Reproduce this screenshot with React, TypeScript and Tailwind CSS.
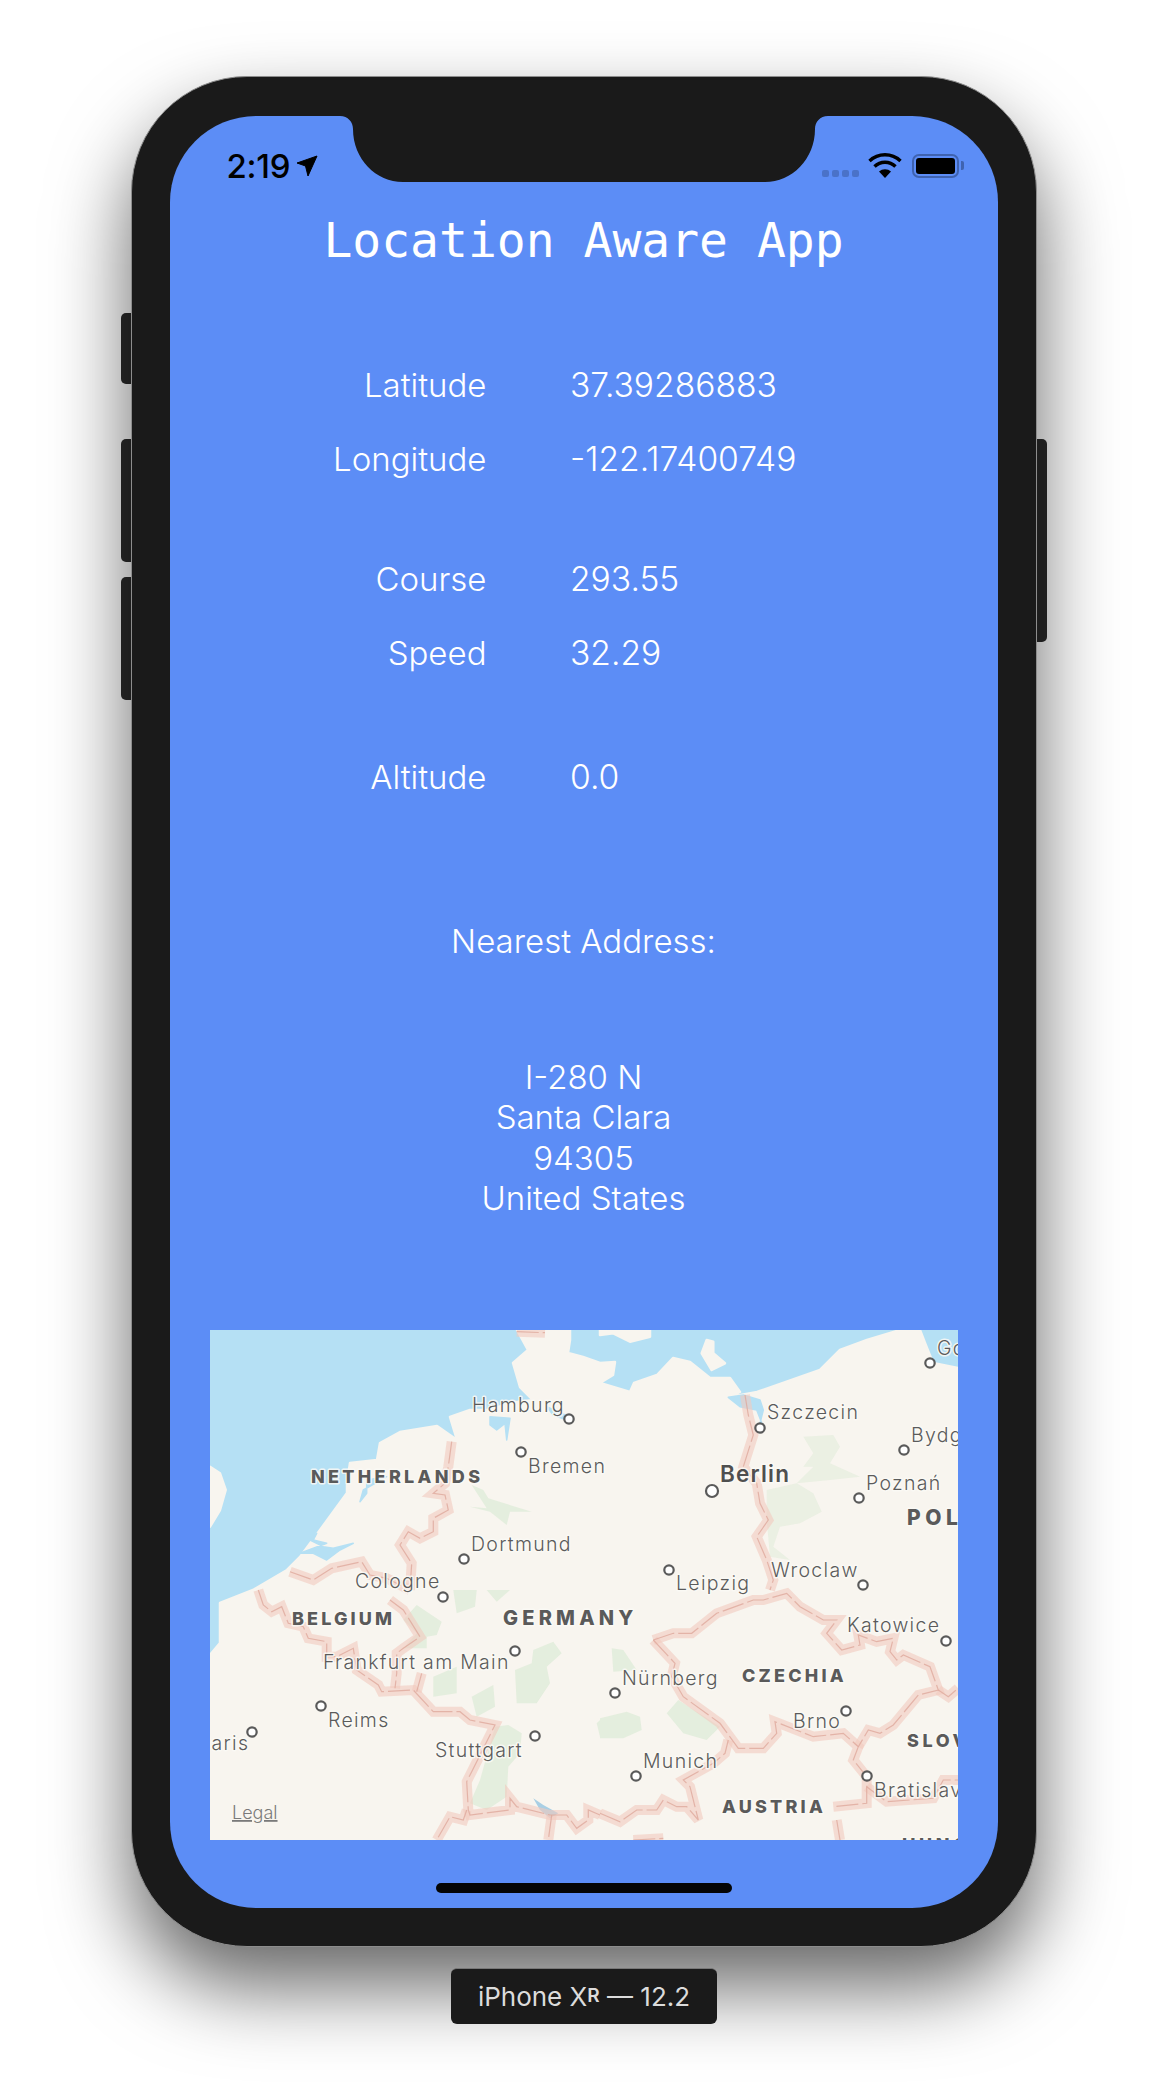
import React from "react";

const City = ({ x, y, t }: { x: number; y: number; t: string }) => (
  <text x={x} y={y} fontSize={19.5} letterSpacing={1.3} fill="#5b5b5b" stroke="#fbfaf6" strokeWidth={3} strokeOpacity={0.85} paintOrder="stroke" strokeLinejoin="round">
    {t}
  </text>
);
const Country = ({ x, y, t, ls = 3.2, size = 18 }: { x: number; y: number; t: string; ls?: number; size?: number }) => (
  <text x={x} y={y} fontSize={size} fontWeight={800} letterSpacing={ls} fill="#5a5a5a" stroke="#fbfaf6" strokeWidth={3} strokeOpacity={0.85} paintOrder="stroke" strokeLinejoin="round">
    {t}
  </text>
);

const conv = (ox: number, oy: number) => (s: string) =>
  s.trim().split(/\s+/).map((p) => {
    const [a, b] = p.split(",").map(Number);
    return `${(ox + a / 3).toFixed(1)},${(oy + b / 3).toFixed(1)}`;
  }).join(" ");
const z3 = conv(200, 1320);
const z4 = conv(600, 1320);
const z5 = conv(200, 1590);
const z6 = conv(600, 1590);

const borders = [
  z3("950,35 1035,38"),
  z3("755,365 745,440 735,490 700,520 735,525 745,570 700,595 700,635 660,655 625,635 600,675 635,730 630,810"),
  z3("270,755 340,780 395,745 485,725 510,765 560,775 630,810"),
  z5("570,30 610,60 660,140 610,175 590,190 590,250 585,295"),
  z5("175,0 190,45 215,65 245,50 265,100 310,110 325,145 380,155 380,200 410,200 460,175 470,240 535,285 545,305 640,300 700,365 780,365 810,390 885,405 815,545 800,575 805,660 810,675 930,660 930,625 950,650 1050,675 1100,675 1130,715 1165,690 1165,660 1200,675"),
  z5("800,660 790,690 750,680 710,750"),
  z5("1055,675 1045,750"),
  z5("665,250 650,305"),
  z6("0,670 60,695 110,660 170,660 190,630 230,650 260,650 295,690 270,590 250,570 340,520 375,490 385,450"),
  z6("160,150 225,220 215,260 250,320 360,400 415,475 490,475 530,430 525,395 640,440 730,430 775,470 760,510 800,560 800,640 700,650"),
  z6("160,150 220,130 275,130 350,70 460,30 490,30 560,10 600,50 670,90 710,90 680,130 725,180 780,165 775,135 830,155 880,145 870,185 890,210 910,195 990,230 1015,300 955,315 880,405 840,430 805,420 775,470"),
  z6("1015,300 1045,320 1074,295"),
  z6("800,590 860,635 1000,625 1030,570 1074,570"),
  z6("710,690 720,750"),
  z6("100,750 190,745"),
  z4("435,225 445,285 460,345 430,440 470,490 480,550 505,600 470,650 500,720 520,780 510,810"),
];

const forests = [
  z3("815,495 850,510 865,535 995,575 930,575 920,615 870,575 810,560 860,565"),
  z4("610,350 700,345 720,380 690,430 780,470 690,480 590,490 640,440 610,440 640,400"),
  z4("500,510 590,490 640,520 665,575 600,610 540,620 520,680 570,720 510,710 500,600"),
  z5("760,0 830,0 825,50 770,70"),
  z5("860,0 930,0 890,35"),
  z5("610,90 650,45 725,95 710,135 680,140 680,175 610,175 650,130"),
  z5("700,260 770,230 770,310 700,320"),
  z5("815,320 880,285 885,350 830,380"),
  z5("945,240 995,220 1000,180 1060,155 1085,190 1040,230 1050,280 1010,340 950,340"),
  z5("885,410 925,405 965,430 960,490 925,530 920,620 860,660 810,640 840,570"),
  z6("35,175 70,180 110,240 40,245"),
  z6("0,385 80,365 120,380 125,420 70,445 0,445"),
  z6("200,370 235,330 360,410 320,450 250,430"),
  z5("1190,400 1200,390 1200,440"),
];

const pins: [number, number, number?][] = [
  [569, 1419], [521, 1452], [464, 1559], [443, 1597], [515, 1651], [321, 1706], [252, 1732], [535, 1736],
  [760, 1428], [712, 1491, 6], [859, 1498], [904, 1450], [930, 1363], [669, 1570], [863, 1585], [946, 1641],
  [615, 1693], [846, 1711], [636, 1776], [867, 1776],
];

const land = { fill: "#f8f5ef", stroke: "#f8f5ef", strokeWidth: 2.5, strokeLinejoin: "round" as const };
const water = { fill: "#b5e0f4", stroke: "#b5e0f4", strokeWidth: 1.5, strokeLinejoin: "round" as const };

const MapView = () => (
  <div className="mx-[40px] mt-[111px] h-[510px] w-[748px] overflow-hidden bg-[#b5e0f4]">
    <svg width="748" height="510" viewBox="210 1330 748 510" fontFamily="Inter, sans-serif">
      <polygon {...land} points={z3("30,440 60,460 77,510 60,570 30,620")} />
      <polygon
        {...land}
        points={`210,1655 220,1643 220,1603 253,1590 287,1570 300,1557 320,1530 347,1493 347,1483 350,1463 377,1460 380,1443 400,1432 437,1426 447,1433 457,1440 450,1417 470,1410 490,1410 510,1403 533,1400 520,1387 513,1363 528,1350 517,1330 570,1330 570,1340 568,1353 583,1357 600,1363 615,1362 613,1375 600,1383 630,1392 634,1383 657,1375 673,1358 690,1362 710,1378 730,1378 740,1392 730,1397 757,1392 820,1370 840,1350 867,1340 900,1330 920,1330 925,1343 933,1363 958,1368 958,1840 210,1840`}
      />
      <polygon {...land} points={z4("0,30 150,30 150,50 90,65 40,40 0,45")} />
      <polygon {...land} points={z4("320,60 340,65 340,100 375,130 335,150 305,100")} />
      <polygon {...water} points={z3("870,290 930,295 920,360 915,310 890,330 870,315")} />
      <polygon {...water} points={z3("1040,260 1095,285 1100,300 1060,285")} />
      <polygon {...water} points={z3("480,545 490,510 560,470 500,480 500,520")} />
      <polygon {...water} points={z3("300,700 340,700 380,720 420,690 460,670 400,685 370,680 330,660 350,640 340,660 380,670")} />
      <polygon {...water} points={z4("385,232 430,225 480,240 490,270 480,310 490,320 470,270 420,260")} />
      {forests.map((p, i) => (
        <polygon key={i} points={p} fill="#e3eddc" fillOpacity={i === 1 || i === 2 ? 0.65 : 0.95} />
      ))}
      <polygon fill="#a9cfe4" points={z5("1000,625 1030,645 1075,670 1050,685 1020,660")} />
      {borders.map((p, i) => (
        <polyline key={i} points={p} fill="none" stroke="#f2c9be" strokeOpacity={0.6} strokeWidth={10} />
      ))}
      {borders.map((p, i) => (
        <polyline key={i} points={p} fill="none" stroke="#dfa99c" strokeOpacity={0.8} strokeWidth={1.2} strokeDasharray="22 4" />
      ))}
      {pins.map(([x, y, r], i) => (
        <circle key={i} cx={x} cy={y} r={r ?? 4.7} fill="#fff" stroke="#5a5a5a" strokeWidth={2.2} />
      ))}
      <City x={472} y={1412} t="Hamburg" />
      <City x={528} y={1473} t="Bremen" />
      <City x={471} y={1551} t="Dortmund" />
      <City x={355} y={1588} t="Cologne" />
      <City x={767} y={1419} t="Szczecin" />
      <text x={720} y={1482} fontSize={22.5} fontWeight={600} letterSpacing={1.2} fill="#4f4f4f" stroke="#fbfaf6" strokeWidth={3} strokeOpacity={0.85} paintOrder="stroke">Berlin</text>
      <City x={866} y={1490} t="Poznań" />
      <City x={911} y={1442} t="Bydgoszcz" />
      <City x={937} y={1355} t="Gdańsk" />
      <City x={771} y={1577} t="Wroclaw" />
      <City x={676} y={1590} t="Leipzig" />
      <City x={323} y={1669} t="Frankfurt am Main" />
      <City x={328} y={1727} t="Reims" />
      <City x={198} y={1750} t="Paris" />
      <City x={435} y={1757} t="Stuttgart" />
      <City x={847} y={1632} t="Katowice" />
      <City x={622} y={1685} t="Nürnberg" />
      <City x={793} y={1728} t="Brno" />
      <City x={643} y={1768} t="Munich" />
      <City x={874} y={1797} t="Bratislava" />
      <Country x={311} y={1483} t="NETHERLANDS" ls={3.3} />
      <Country x={292} y={1625} t="BELGIUM" ls={3.1} />
      <Country x={503} y={1625} t="GERMANY" ls={4.2} size={20} />
      <Country x={742} y={1682} t="CZECHIA" ls={3.2} />
      <Country x={722} y={1813} t="AUSTRIA" ls={3.2} />
      <Country x={907} y={1525} t="POLAND" ls={4.5} size={21} />
      <Country x={907} y={1747} t="SLOVAKIA" ls={3.6} />
      <Country x={902} y={1851} t="HUNGARY" ls={3.6} />
      <text x={232} y={1819} fontSize={18} fill="#7a7a7a" textDecoration="underline">Legal</text>
    </svg>
  </div>
);

const Row = ({ label, value, cls = "" }: { label: string; value: string; cls?: string }) => (
  <div className={`grid grid-cols-[317px_1fr] gap-x-[83.5px] leading-[40px] ${cls}`}>
    <span className="text-right">{label}</span>
    <span className="text-[33.6px]">{value}</span>
  </div>
);

const Wifi = () => (
  <svg width="34" height="25" viewBox="0 0 34 25" className="mt-[5px]">
    <path d="M17 25 L11 18.5 A9 9 0 0 1 23 18.5 Z" fill="#000" />
    <path d="M6.5 13.5 A15 15 0 0 1 27.5 13.5" fill="none" stroke="#000" strokeWidth="3.4" />
    <path d="M1.5 8 A22.5 22.5 0 0 1 32.5 8" fill="none" stroke="#000" strokeWidth="3.4" />
  </svg>
);

const StatusBar = () => (
  <div className="flex items-start justify-between pl-[57px] pr-[34px] pt-[32px]">
    <div className="flex items-start gap-[6px] text-[33px] font-medium leading-[36px] tracking-[-0.3px] text-black">
      <span>2:19</span>
      <svg className="mt-[7px]" width="22" height="22" viewBox="0 0 22 22">
        <path d="M1 8 L21 1 L12 21 L9.5 11 Z" fill="#000" stroke="#000" strokeWidth="1" strokeLinejoin="round" />
      </svg>
    </div>
    <div className="flex items-start">
      <div className="mr-[9px] mt-[22px] flex gap-[2.7px]">
        <span className="h-[7px] w-[7px] rounded-[2px] bg-[#4a72c8]" />
        <span className="h-[7px] w-[7px] rounded-[2px] bg-[#4a72c8]" />
        <span className="h-[7px] w-[7px] rounded-[2px] bg-[#4a72c8]" />
        <span className="h-[7px] w-[7px] rounded-[2px] bg-[#4a72c8]" />
      </div>
      <Wifi />
      <div className="ml-[10px] mt-[6px] h-[24px] w-[47px] rounded-[7px] border-2 border-[#3f63b0] p-[2px]">
        <div className="h-full w-full rounded-[3px] bg-black" />
      </div>
      <div className="ml-[2px] mt-[13px] h-[9px] w-[3px] rounded-r-[2px] bg-[#3f63b0]" />
    </div>
  </div>
);

export default function App() {
  return (
    <div className="relative flex h-[2096px] w-[1168px] flex-col items-center overflow-hidden bg-white pt-[76px]">
      {/* side buttons, tucked behind the phone body */}
      <div className="absolute left-[121px] top-[313px] h-[71px] w-[14px] rounded-l-[5px] bg-[#2b2b2b]" />
      <div className="absolute left-[121px] top-[439px] h-[123px] w-[14px] rounded-l-[5px] bg-[#2b2b2b]" />
      <div className="absolute left-[121px] top-[577px] h-[123px] w-[14px] rounded-l-[5px] bg-[#2b2b2b]" />
      <div className="absolute left-[1033px] top-[439px] h-[203px] w-[14px] rounded-r-[5px] bg-[#2b2b2b]" />

      <div className="relative z-10 h-[1871px] w-[906px] rounded-[116px] border-[1.5px] border-[#8d8d8d] bg-[#1a1a1a] px-[37.5px] pt-[38.5px] shadow-[0_40px_80px_rgba(0,0,0,0.6)]">
        <div className="relative h-[1792px] w-[828px] overflow-hidden rounded-[86px] bg-[#5c8df6] font-['Inter',sans-serif] text-[33px] font-[350] text-white">
          <StatusBar />
          <div className="mt-[28px] text-center font-['DejaVu_Sans_Mono',monospace] text-[48px] font-normal leading-[56px]">Location Aware App</div>

          <div className="mt-[97px]">
            <Row label="Latitude" value="37.39286883" />
            <Row label="Longitude" value="-122.17400749" cls="mt-[34px]" />
            <Row label="Course" value="293.55" cls="mt-[80px]" />
            <Row label="Speed" value="32.29" cls="mt-[34px]" />
            <Row label="Altitude" value="0.0" cls="mt-[84px]" />
          </div>
          <div className="mt-[124px] text-center leading-[40px]">Nearest Address:</div>
          <div className="mt-[96px] text-center leading-[40.5px]">
            <div>I-280 N</div>
            <div>Santa Clara</div>
            <div>94305</div>
            <div>United States</div>
          </div>
          <MapView />

          {/* notch overlays the top of the screen */}
          <svg className="absolute left-[170px] top-0" width="488" height="68" viewBox="0 2 488 68">
            <path d="M0 2 H488 C480 2 475 8 475 15 C475 45 452 68 425 68 H63 C36 68 13 45 13 15 C13 8 8 2 0 2 Z" fill="#1a1a1a" />
          </svg>

          {/* home indicator */}
          <div className="absolute bottom-[15px] left-[266px] h-[10px] w-[296px] rounded-full bg-[#050505]" />
        </div>
      </div>

      {/* device label */}
      <div className="relative z-10 mt-[21px] flex h-[56px] w-[266px] items-center justify-center rounded-[6px] border-t border-[#777] bg-[#1a1a1a] font-['Inter',sans-serif] text-[26px] font-normal text-[#dcdcdc]">
        iPhone X<span className="text-[19px] font-semibold">R</span>&nbsp;— 12.2
      </div>
    </div>
  );
}
